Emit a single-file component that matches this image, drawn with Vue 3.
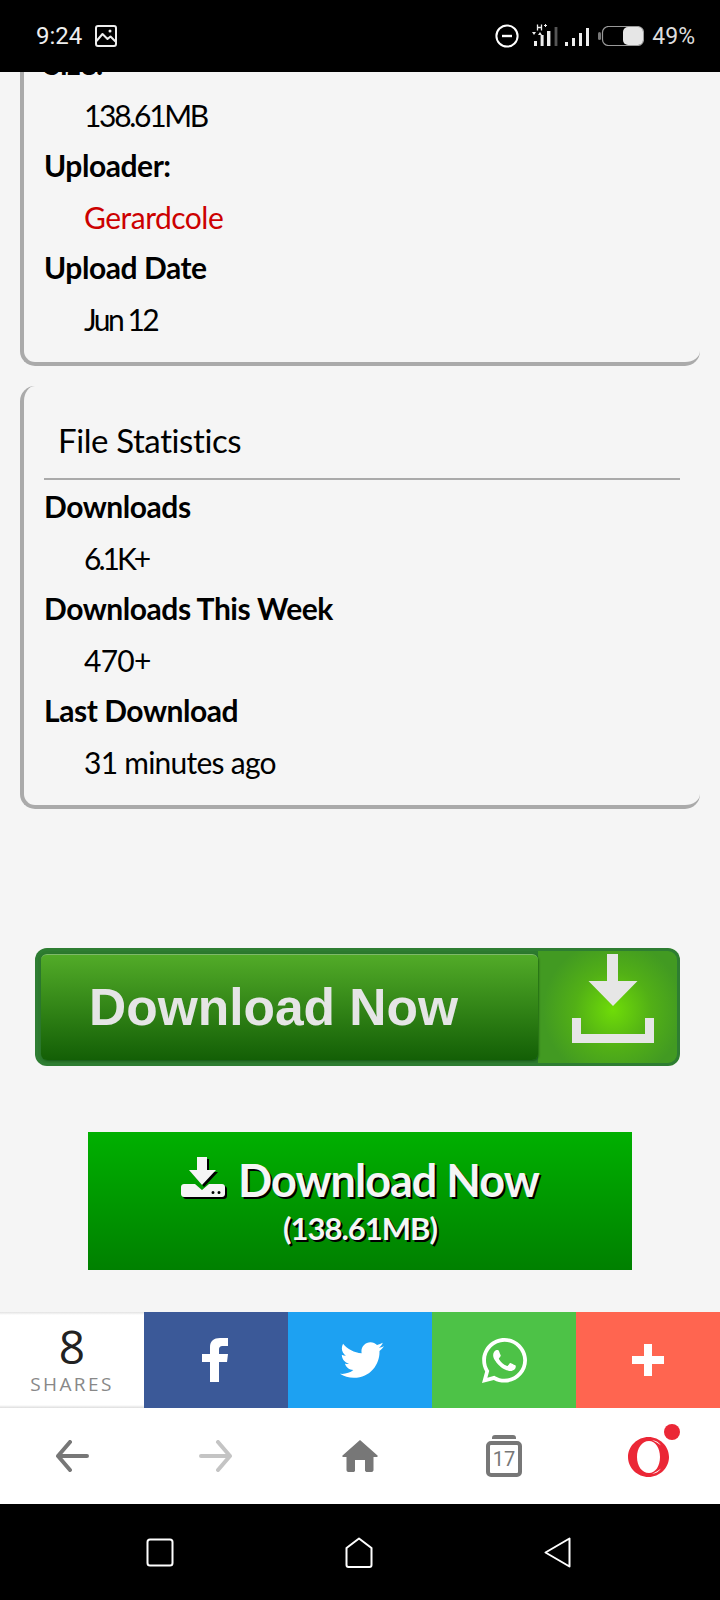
<script setup>
const card1 = [
  { label: 'Size:', value: '138.61MB', sp: -2.3 },
  { label: 'Uploader:', value: 'Gerardcole', sp: -0.5, link: true },
  { label: 'Upload Date', value: 'Jun 12', sp: -2.5 }
]
const card2 = [
  { label: 'Downloads', value: '6.1K+', sp: -3 },
  { label: 'Downloads This Week', value: '470+', sp: -0.75 },
  { label: 'Last Download', value: '31 minutes ago', sp: -0.75 }
]
</script>

<template>
  <div class="phone">
    <header class="status">
      <div class="status-left">
        <span class="time">9:24</span>
        <svg class="ic-img" width="22" height="22" viewBox="0 0 22 22" fill="none" stroke="#eee" stroke-width="2" stroke-linejoin="round">
          <rect x="1" y="1" width="20" height="20" rx="2"/>
          <path d="M1.5 16l6-7 5 5 3-2.5 5 5"/>
          <circle cx="15" cy="6" r="1.5" fill="#eee" stroke="none"/>
        </svg>
      </div>
      <div class="status-right">
        <svg width="24" height="24" viewBox="0 0 24 24" fill="none" stroke="#fff" stroke-width="2">
          <circle cx="12" cy="12" r="10.6"/>
          <path d="M7 12h10" stroke-width="2.4"/>
        </svg>
        <svg class="sig1" width="26" height="22" viewBox="0 0 26 22" fill="#eee">
          <path d="M5.5 0.5v6M9.5 0.5v6M5.5 3.5h4" fill="none" stroke="#eee" stroke-width="1.3"/>
          <path d="M12 1.5h3M13.5 0v3" fill="none" stroke="#eee" stroke-width="1"/>
          <path d="M0 8h4l-2 3zM6 11h4l-2-3z"/>
          <rect x="2" y="17" width="3" height="5"/>
          <rect x="8.600" y="11" width="3" height="11"/>
          <rect x="15" y="7" width="3.400" height="15"/>
          <rect x="22.600" y="3" width="2.800" height="19" fill="#555"/>
        </svg>
        <svg class="sig2" width="25" height="20" viewBox="0 0 25 20" fill="#eee">
          <rect x="0" y="15" width="3" height="4"/>
          <rect x="7" y="11" width="3" height="8"/>
          <rect x="14" y="6" width="3" height="13"/>
          <rect x="21" y="1" width="3" height="18"/>
        </svg>
        <svg class="batt" width="46" height="20" viewBox="0 0 46 20">
          <rect x="0" y="6" width="3" height="8" rx="1.500" fill="#777"/>
          <rect x="4.500" y="0.500" width="41" height="19" rx="6" fill="none" stroke="#999" stroke-width="1.200"/>
          <rect x="25" y="1" width="20" height="18" rx="5" fill="#e6e6e6"/>
        </svg>
        <span class="pct">49%</span>
      </div>
    </header>

    <main class="main">
      <section class="card first">
        <div v-for="r in card1" :key="r.label">
          <div class="label">{{ r.label }}</div>
          <div class="value" :class="{ link: r.link }" :style="{ letterSpacing: r.sp + 'px' }">{{ r.value }}</div>
        </div>
      </section>

      <section class="card second">
        <h2 class="title">File Statistics</h2>
        <div v-for="r in card2" :key="r.label">
          <div class="label">{{ r.label }}</div>
          <div class="value" :style="{ letterSpacing: r.sp + 'px' }">{{ r.value }}</div>
        </div>
      </section>

      <div class="banner">
        <div class="banner-btn"><span class="banner-text">Download Now</span></div>
        <div class="banner-icon">
          <svg width="82" height="90" viewBox="0 0 82 90" fill="#e6e6e6">
            <path d="M35 0h11v27h19.500L41 52 16.500 27H35z"/>
            <path d="M0 64h9v16h64V64h9v25H0z"/>
          </svg>
        </div>
      </div>

      <div class="dl">
        <div class="dl-top">
          <svg class="dl-icon" width="44" height="41" viewBox="0 0 44 41" fill="#f5f5f5">
            <path d="M16 0h10v13h9L21 28 8 13h8z"/>
            <path fill-rule="evenodd" d="M3 27h11l7 6 7-6h13c1.500 0 3 1.200 3 3v7c0 1.800-1.500 3-3 3H3c-1.500 0-3-1.200-3-3v-7c0-1.800 1.500-3 3-3zM32 34a1.500 1.500 0 1 0 0 3 1.500 1.500 0 0 0 0-3zM38 34a1.500 1.500 0 1 0 0 3 1.500 1.500 0 0 0 0-3z"/>
          </svg>
          <span>Download Now</span>
        </div>
        <div class="dl-size">(138.61MB)</div>
      </div>
    </main>

    <div class="share">
      <div class="cell count">
        <div class="num">8</div>
        <div class="shares">SHARES</div>
      </div>
      <div class="cell fb">
        <svg class="fb-ic" width="26" height="44" viewBox="0 0 26 44" fill="#fff">
          <path d="M8 44V24H0v-8h8V9c0-6 4-9 10-9h8v8h-5c-3 0-4 1-4 4v4h9l-1 8h-8v20z"/>
        </svg>
      </div>
      <div class="cell tw">
        <svg class="tw-ic" width="44" height="44" viewBox="0 0 512 512" fill="#fff">
          <path d="M459.37 151.716c.325 4.548.325 9.097.325 13.645 0 138.72-105.583 298.558-298.558 298.558-59.452 0-114.68-17.219-161.137-47.106 8.447.974 16.568 1.299 25.34 1.299 49.055 0 94.213-16.568 130.274-44.832-46.132-.975-84.792-31.188-98.112-72.772 6.498.974 12.995 1.624 19.818 1.624 9.421 0 18.843-1.3 27.614-3.573-48.081-9.747-84.143-51.98-84.143-102.985v-1.299c13.969 7.797 30.214 12.67 47.431 13.319-28.264-18.843-46.781-51.005-46.781-87.391 0-19.492 5.197-37.36 14.294-52.954 51.655 63.675 129.3 105.258 216.365 109.807-1.624-7.797-2.599-15.918-2.599-24.04 0-57.828 46.782-104.934 104.934-104.934 30.213 0 57.502 12.67 76.67 33.137 23.715-4.548 46.456-13.645 66.599-25.665-7.798 24.366-24.366 44.833-46.132 57.827 21.117-2.273 41.584-8.122 60.426-16.243-14.292 20.791-32.161 39.308-52.628 54.253z"/>
        </svg>
      </div>
      <div class="cell wa">
        <svg width="45" height="45" viewBox="0 32 448 448" fill="#fff">
          <path d="M380.9 97.1C339 55.1 283.2 32 223.9 32c-122.4 0-222 99.6-222 222 0 39.1 10.2 77.3 29.6 111L0 480l117.7-30.9c32.4 17.7 68.9 27 106.1 27h.1c122.3 0 224.1-99.6 224.1-222 0-59.3-25.2-115-67.1-157zm-157 341.6c-33.2 0-65.7-8.9-94-25.7l-6.7-4-69.8 18.3L72 359.2l-4.4-7c-18.5-29.4-28.2-63.3-28.2-98.2 0-101.7 82.8-184.5 184.6-184.5 49.3 0 95.6 19.2 130.4 54.1 34.8 34.9 56.2 81.2 56.1 130.5 0 101.8-84.9 184.6-186.6 184.6zm101.2-138.2c-5.500-2.800-32.800-16.200-37.900-18-5.100-1.900-8.800-2.800-12.500 2.800-3.700 5.600-14.300 18-17.600 21.800-3.200 3.700-6.500 4.200-12 1.400-32.600-16.300-54-29.100-75.500-66-5.700-9.800 5.700-9.100 16.300-30.300 1.800-3.700.9-6.900-.5-9.700-1.400-2.800-12.500-30.100-17.100-41.200-4.500-10.800-9.100-9.300-12.500-9.500-3.200-.2-6.900-.2-10.600-.2-3.700 0-9.700 1.400-14.800 6.900-5.100 5.600-19.400 19-19.400 46.300 0 27.300 19.900 53.700 22.600 57.400 2.800 3.700 39.100 59.700 94.800 83.800 35.200 15.200 49 16.500 66.600 13.900 10.700-1.600 32.800-13.400 37.400-26.400 4.600-13 4.600-24.100 3.200-26.400-1.300-2.500-5-3.900-10.500-6.600z"/>
        </svg>
      </div>
      <div class="cell more">
        <svg width="32" height="32" viewBox="0 0 32 32" fill="#fff">
          <path d="M12 0h8v12h12v8H20v12h-8V20H0v-8h12z"/>
        </svg>
      </div>
    </div>

    <nav class="browser">
      <div class="b-item">
        <svg width="34" height="32" viewBox="0 0 34 32" fill="none" stroke="#777" stroke-width="4" stroke-linecap="round" stroke-linejoin="round">
          <path d="M15 2L3 16l12 14M3 16h29"/>
        </svg>
      </div>
      <div class="b-item">
        <svg width="34" height="32" viewBox="0 0 34 32" fill="none" stroke="#c4c4c4" stroke-width="4" stroke-linecap="round" stroke-linejoin="round">
          <path d="M19 2l12 14-12 14M31 16H2"/>
        </svg>
      </div>
      <div class="b-item">
        <svg width="36" height="32" viewBox="0 0 36 32" fill="#777">
          <path d="M18 0L35.500 15.500c.5.700.2 1.500-.7 1.500H31.500v13c0 1.200-.8 2-2 2H25c-.8 0-2-.6-2-1.500V20H13v10.500c0 .9-.7 1.500-1.500 1.500h-5c-1.200 0-2-.8-2-2V17H1.200c-.9 0-1.200-.8-.7-1.500z"/>
        </svg>
      </div>
      <div class="b-item">
        <div class="tabs">
          <span class="tabs-top"></span>
          <span class="tabs-box">17</span>
        </div>
      </div>
      <div class="b-item opera-cell">
        <svg class="opera" width="52" height="52" viewBox="0 0 52 52">
          <path fill="#eb2736" fill-rule="evenodd" d="M20.500 8C31.500 8 41 17 41 28S31.500 48 20.500 48 0 39 0 28 9.500 8 20.500 8zM21 12c-7 0-12 7-12 16s5 16 12 16c6.500 0 11-7 11-16S27.500 12 21 12z"/>
          <path fill="#fff" d="M24 11c4 .5 7 2.500 9 5.500-2.500-2.300-6-4-9-5.500zM24 45c4-.5 7-2.500 9-5.500-2.500 2.300-6 4-9 5.500z"/>
          <circle cx="44" cy="3" r="8" fill="#eb2736"/>
        </svg>
      </div>
    </nav>

    <footer class="system">
      <svg width="28" height="29" viewBox="0 0 28 29" fill="none" stroke="#fff" stroke-width="2">
        <rect x="1.500" y="1.500" width="25" height="26" rx="2.500"/>
      </svg>
      <svg width="28" height="31" viewBox="0 0 28 31" fill="none" stroke="#fff" stroke-width="2" stroke-linejoin="round">
        <path d="M14 1.500L26.500 11v17c0 1.200-.8 2-2 2h-21c-1.200 0-2-.8-2-2V11z" />
      </svg>
      <svg width="27" height="31" viewBox="0 0 27 31" fill="none" stroke="#fff" stroke-width="2" stroke-linejoin="round">
        <path d="M25.500 1.500v28L1.500 15.500z"/>
      </svg>
    </footer>
  </div>
</template>

<style scoped>
.phone {
  width: 720px;
  height: 1600px;
  display: flex;
  flex-direction: column;
  background: #f5f5f5;
  font-family: Lato, "Open Sans", sans-serif;
  overflow: hidden;
}
.status {
  height: 72px;
  flex: none;
  background: #000;
  color: #eee;
  display: flex;
  align-items: center;
  justify-content: space-between;
  padding: 0 25px 0 36px;
  box-sizing: border-box;
  position: relative;
  z-index: 2;
  font-family: Roboto, sans-serif;
}
.status-left, .status-right { display: flex; align-items: center; }
.status-left { gap: 13px; }
.time { font-size: 24px; }
.status-right svg { flex: none; }
.sig1 { margin-left: 13px; margin-top: -2px; }
.sig2 { margin-left: 7px; margin-top: 2px; }
.batt { margin-left: 8px; }
.pct { font-size: 23px; margin-left: 8px; color: #ddd; }

.main {
  flex: 1;
  min-height: 0;
  padding: 0 20px;
  overflow: hidden;
}
.card {
  border-left: 4px solid #aaa;
  border-bottom: 4px solid #aaa;
  border-radius: 15px;
  padding: 0 20px 18px 20px;
  width: 680px;
  box-sizing: border-box;
  color: #000;
}
.first { margin-top: -34px; }
.second { margin-top: 20px; }
.title {
  margin: 0 0 1px;
  font-size: 33px;
  font-weight: 400;
  height: 94px;
  padding: 36px 0 0 14px;
  line-height: 36px;
  box-sizing: border-box;
  border-bottom: 2px solid #aaa;
  letter-spacing: -0.4px;
}
.label, .value {
  height: 51px;
  font-size: 30px;
}
.label { font-weight: 700; line-height: 50px; letter-spacing: -0.45px; }
.value { padding-left: 40px; line-height: 52px; }
.link { color: #cc0000; }

.banner {
  margin: 139px 0 0 15px;
  width: 645px;
  height: 118px;
  border-radius: 12px;
  box-sizing: border-box;
  padding: 6px 0 6px 6px;
  display: flex;
  background:
    linear-gradient(to right, #2c7a2e 0, #2c7a2e 503px, transparent 503px),
    radial-gradient(circle at 578px 62px, #6fdc08 0, #52b016 38px, #429a22 70px, #429a22 100%);
  box-shadow: inset 0 0 0 3px #2e7d32;
}
.banner-btn {
  width: 497px;
  border-radius: 6px;
  background: linear-gradient(#52ab28, #135f06);
  border-top: 1px solid #7db968;
  box-sizing: border-box;
  box-shadow: 1px 1px 2px rgba(0, 60, 0, .5);
  font-family: "Liberation Sans", Arial, sans-serif;
  font-weight: 700;
  color: #e5e5e5;
  font-size: 51.500px;
  padding: 19px 0 0 48px;
  line-height: 66px;
  white-space: nowrap;
}
.banner-text { filter: blur(.6px); display: inline-block; }
.banner-icon {
  padding: 0 0 0 34px;
  display: flex;
  align-items: flex-start;
}

.dl {
  margin: 66px 0 0 68px;
  width: 544px;
  height: 138px;
  background: linear-gradient(#00b000, #008000);
  color: #f5f5f5;
  text-align: center;
  font-weight: 700;
  text-shadow: 2px 2px 0 #000;
  padding-top: 23px;
  box-sizing: border-box;
}
.dl-top {
  display: flex;
  align-items: center;
  justify-content: center;
  gap: 13px;
  font-size: 45px;
  line-height: 50px;
  letter-spacing: -1px;
}
.dl-icon { filter: drop-shadow(2px 2px 0 #000); margin-top: -6px; }
.dl-size {
  font-size: 31px;
  line-height: 38px;
  letter-spacing: -1px;
  margin-top: 4px;
}

.share {
  height: 96px;
  flex: none;
  display: grid;
  grid-template-columns: repeat(5, 144px);
}
.cell {
  display: flex;
  align-items: center;
  justify-content: center;
}
.count {
  background: linear-gradient(#e2e2e2, #fff 3px, #fff 93px, #ddd);
  flex-direction: column;
  color: #222;
  padding-bottom: 4px;
  box-sizing: border-box;
}
.num { font-size: 46px; line-height: 50px; font-family: "Open Sans", sans-serif; }
.shares { font-size: 19px; line-height: 22px; letter-spacing: 2.400px; color: #888; font-family: "Open Sans", sans-serif; margin-top: 2px; }
.fb { background: #3b5998; }
.fb-ic { margin-right: 2px; }
.tw { background: #1da1f2; }
.tw-ic { margin-left: 4px; }
.wa { background: #4dc247; }
.more { background: #ff6550; }

.browser {
  height: 96px;
  flex: none;
  background: #fff;
  display: grid;
  grid-template-columns: repeat(5, 144px);
}
.b-item { display: flex; align-items: center; justify-content: center; }
.opera-cell { padding-left: 12px; margin-top: -2px; }
.opera { overflow: visible; }
.tabs { display: flex; flex-direction: column; align-items: center; }
.tabs-top {
  width: 24px;
  height: 4px;
  background: #777;
  border-radius: 3px 3px 0 0;
  margin-bottom: 2px;
}
.tabs-box {
  width: 36px;
  height: 36px;
  box-sizing: border-box;
  border: 4px solid #777;
  border-radius: 5px;
  font-family: Roboto, sans-serif;
  font-size: 20px;
  line-height: 28px;
  text-align: center;
  color: #777;
}

.system {
  height: 96px;
  flex: none;
  background: #000;
  display: flex;
  align-items: center;
  padding: 0 149px 0 146px;
  justify-content: space-between;
  box-sizing: border-box;
}
</style>
